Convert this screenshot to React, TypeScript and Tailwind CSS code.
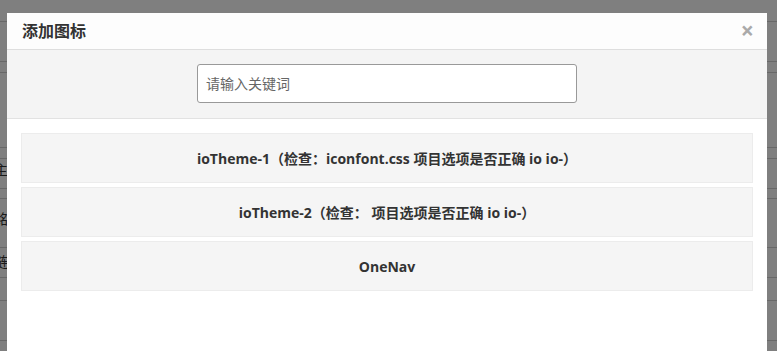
import React from 'react';

const sources = [
  'ioTheme-1（检查：iconfont.css 项目选项是否正确 io io-）',
  'ioTheme-2（检查： 项目选项是否正确 io io-）',
  'OneNav',
];

const BackdropPage = () => (
  <div className="h-[351px] bg-white text-sm text-[#333]">
    <div className="h-[21px]"></div>
    <div className="h-[40px] border-t border-[#d0d0d0]"></div>
    <div className="h-[11px] border-t border-[#d0d0d0]"></div>
    <div className="h-[75px] border-t border-[#d0d0d0]"></div>
    <div className="h-[11px] border-t border-[#d0d0d0]"></div>
    <div className="h-[30px] border-t border-[#d0d0d0] -ml-[6px] pt-[1px]">主</div>
    <div className="h-[10px] border-t border-[#d0d0d0]"></div>
    <div className="h-[49px] border-t border-[#d0d0d0] -ml-[6px] pt-[10px]">铭</div>
    <div className="h-[30px] border-t border-[#d0d0d0] -ml-[6px] pt-[4px]">链</div>
    <div className="h-[23px] border-t border-[#d0d0d0]"></div>
    <div className="h-[40px] border-t border-[#d0d0d0]"></div>
    <div className="border-t border-[#d0d0d0]"></div>
  </div>
);

export default function App() {
  return (
    <div
      className="relative h-[351px] w-[777px] overflow-hidden"
      style={{ fontFamily: '"Open Sans", "Noto Sans CJK SC", sans-serif' }}
    >
      <BackdropPage />
      <div className="absolute inset-0 bg-black/50"></div>

      <div className="absolute left-[7px] top-[13px] w-[760px] h-[338px] bg-white flex flex-col">
        <div className="h-[37px] flex items-center justify-between px-[15px] bg-[#fdfdfd] border-b border-[#dedede]">
          <h3 className="text-[16px] font-bold text-[#333] leading-none">添加图标</h3>
          <span className="text-[23px] font-bold text-[#aaa] leading-none -mt-[2px] mr-[-2px]">×</span>
        </div>

        <div className="h-[69px] bg-[#f4f4f4] border-b border-[#e2e2e2] flex items-center justify-center">
          <div className="w-[380px] h-[39px] bg-white border border-[#999] rounded-[3px] flex items-center px-[8px] -mt-[2px]">
            <span className="text-[14px] text-[#666]">请输入关键词</span>
          </div>
        </div>

        <div className="flex flex-col gap-[4px] px-[14px] pt-[14px]">
          {sources.map((s) => (
            <div
              key={s}
              className="h-[50px] bg-[#f5f5f5] border border-[#ececec] flex items-center justify-center text-[14px] font-bold text-[#333]"
            >
              {s}
            </div>
          ))}
        </div>
      </div>
    </div>
  );
}
